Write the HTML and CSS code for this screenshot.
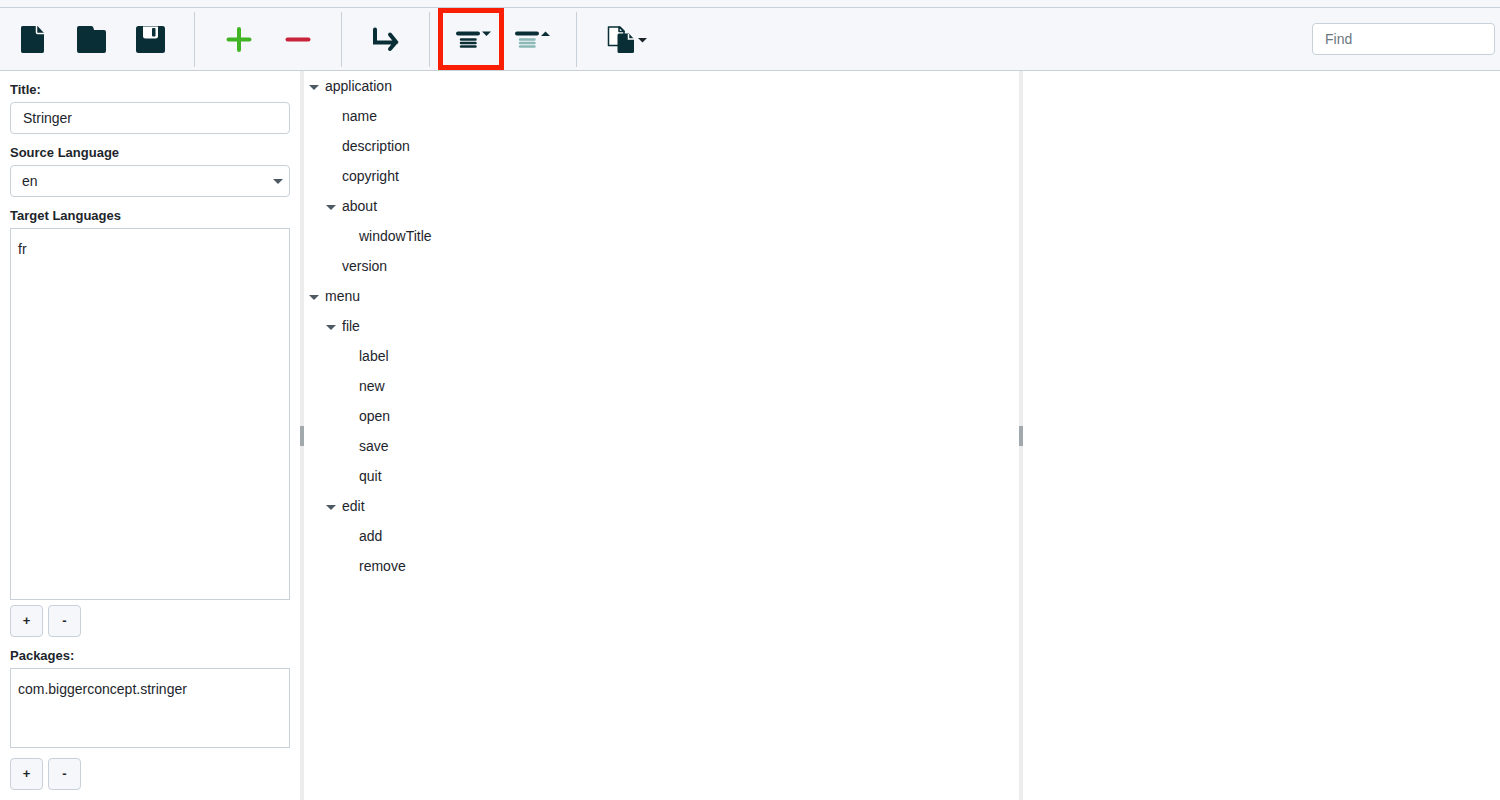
FILE: index.html
```html
<!DOCTYPE html>
<html lang="en">
<head>
<meta charset="utf-8">
<title>Stringer</title>
<link rel="stylesheet" href="styles.css">
</head>
<body>
<div class="app">
  <header class="toolbar">
    <div class="tools">
      <button class="tool" type="button" aria-label="New">
        <svg viewBox="3 8 59 62"><path class="ink" d="M22.500 26H37.500L44 33V51Q44 53 42.500 53H22.500Q21 53 21 51V27.500Q21 26 22.500 26Z"/><path d="M36.500 26V32.500Q36.500 33.500 37.500 33.500H44" fill="none" stroke="#fff" stroke-width="1.500"/></svg>
      </button>
      <button class="tool" type="button" aria-label="Open">
        <svg viewBox="62 8 59 62"><path class="ink" d="M79 26H91.500Q93 26 93.500 28L94 30H104Q106 30 106 32V51Q106 53 104 53H79Q77 53 77 51V28Q77 26 79 26Z"/></svg>
      </button>
      <button class="tool" type="button" aria-label="Save">
        <svg viewBox="121 8 59 62"><rect class="ink" x="136" y="26" width="29" height="27" rx="2.500"/><path d="M143 26.500H158V36Q158 38.500 155.500 38.500H145.500Q143 38.500 143 36Z" fill="#fff"/><rect class="ink" x="152" y="28" width="3.500" height="8.500" rx="1"/></svg>
      </button>
      <span class="separator"></span>
      <button class="tool" type="button" aria-label="Add">
        <svg viewBox="209 8 59 62"><path d="M228.500 39.500H249.500M239 29V50" stroke="#41b424" stroke-width="4" stroke-linecap="round"/></svg>
      </button>
      <button class="tool" type="button" aria-label="Remove">
        <svg viewBox="268 8 59 62"><path d="M287.500 39.500H308.500" stroke="#c9233a" stroke-width="4" stroke-linecap="round"/></svg>
      </button>
      <span class="separator"></span>
      <button class="tool" type="button" aria-label="Move">
        <svg viewBox="356 8 59 62"><path class="ink-line" d="M375 29.500V42.500H396M390 34.500L396 42L390 49" stroke-width="4"/></svg>
      </button>
      <span class="separator"></span>
      <button class="tool selected" type="button" aria-label="Expand all">
        <svg viewBox="444 8 59 62"><path class="ink-line" d="M458 33.500H478" stroke-width="4"/><path class="ink-line" d="M461 39.500H475.500M461 43H475.500M461 46.500H475.500" stroke-width="2.500"/><path class="ink" d="M482 31.500H491L486.500 36Z"/></svg>
      </button>
      <button class="tool" type="button" aria-label="Collapse all">
        <svg viewBox="503 8 59 62"><path class="ink-line" d="M517 33.500H537" stroke-width="4"/><path d="M520 39.500H534.500M520 43H534.500M520 46.500H534.500" stroke="#8bb9b7" stroke-width="2.500" stroke-linecap="round"/><path class="ink" d="M541 36H550L545.500 31.500Z"/></svg>
      </button>
      <span class="separator"></span>
      <button class="tool" type="button" aria-label="Copy">
        <svg viewBox="591 8 59 62"><path class="ink-edge" d="M608.500 27H620L624 31V45.500H608.500Z"/><path class="ink-edge" d="M619 27V31.500H624Z"/><path class="ink" d="M619 33.500H629L634 39V51.500Q634 53 632.500 53H619Q617.500 53 617.500 51.500V35Q617.500 33.500 619 33.500Z"/><path d="M628.500 34V39H634" fill="none" stroke="#fff" stroke-width="1.500"/><path d="M638 38H647L642.500 42.500Z" fill="#1d252c"/></svg>
      </button>
    </div>
    <input class="field find" type="search" placeholder="Find" aria-label="Find">
  </header>
  <main class="panes">
    <section class="sidebar">
      <label class="label" for="title">Title:</label>
      <input class="field" id="title" type="text" value="Stringer">
      <label class="label" for="source">Source Language</label>
      <div class="select-wrap">
        <select class="field" id="source"><option>en</option></select>
        <svg class="select-arrow" viewBox="0 0 10 5"><path d="M0 0H10L5 5Z" fill="#4d5963"/></svg>
      </div>
      <h2 class="label" id="targets">Target Languages</h2>
      <ul class="list grow" aria-labelledby="targets"><li>fr</li></ul>
      <div class="actions">
        <button class="btn" type="button">+</button>
        <button class="btn" type="button">-</button>
      </div>
      <h2 class="label" id="packages">Packages:</h2>
      <ul class="list packages" aria-labelledby="packages"><li>com.biggerconcept.stringer</li></ul>
      <div class="actions last">
        <button class="btn" type="button">+</button>
        <button class="btn" type="button">-</button>
      </div>
    </section>
    <div class="splitter"><span class="grip"></span></div>
    <section class="tree-pane">
      <ul class="tree">
        <li><span class="node open">application</span>
          <ul>
            <li><span class="node">name</span></li>
            <li><span class="node">description</span></li>
            <li><span class="node">copyright</span></li>
            <li><span class="node open">about</span>
              <ul><li><span class="node">windowTitle</span></li></ul>
            </li>
            <li><span class="node">version</span></li>
          </ul>
        </li>
        <li><span class="node open">menu</span>
          <ul>
            <li><span class="node open">file</span>
              <ul>
                <li><span class="node">label</span></li>
                <li><span class="node">new</span></li>
                <li><span class="node">open</span></li>
                <li><span class="node">save</span></li>
                <li><span class="node">quit</span></li>
              </ul>
            </li>
            <li><span class="node open">edit</span>
              <ul>
                <li><span class="node">add</span></li>
                <li><span class="node">remove</span></li>
              </ul>
            </li>
          </ul>
        </li>
      </ul>
    </section>
    <div class="splitter"><span class="grip"></span></div>
    <section class="detail-pane"></section>
  </main>
</div>
</body>
</html>
```
FILE: styles.css
```css
* { box-sizing: border-box; }
body {
  margin: 0;
  font: 14px/20px "Liberation Sans", Arial, sans-serif;
  color: #1d252c;
  background: #fff;
}
ul { list-style: none; margin: 0; padding: 0; }
button, input, select { font: inherit; color: inherit; }

.app {
  display: flex;
  flex-direction: column;
  height: 100vh;
  padding-top: 7px;
  background: #f5f7fb;
}
.toolbar {
  display: flex;
  align-items: center;
  justify-content: space-between;
  padding: 0 5px 0 3px;
  border: solid #c8d1d9;
  border-width: 1px 0;
}
.tools { display: flex; align-items: center; }
.tool {
  position: relative;
  width: 59px;
  height: 62px;
  padding: 0;
  border: 0;
  background: none;
}
.tool svg { display: block; width: 100%; height: 100%; }
.tool.selected::after {
  content: "";
  position: absolute;
  inset: 0 -1px 0 -6px;
  border: 5px solid #fa1e05;
}
.separator {
  width: 1px;
  height: 55px;
  margin: 0 14px;
  background: #c8d1d9;
}
.ink { fill: #092e35; }
.ink-line { fill: none; stroke: #092e35; stroke-linecap: round; }
.ink-edge { fill: #fff; stroke: #092e35; stroke-width: 1.5; stroke-linejoin: round; }

.field {
  width: 100%;
  height: 32px;
  padding: 0 12px;
  border: 1px solid #c8d1d9;
  border-radius: 4px;
  background: #fff;
  appearance: none;
}
.field::placeholder { color: #6b7780; opacity: 1; }
.find { width: 183px; }
select.field { padding: 0 11px; }
.select-wrap { position: relative; }
.select-arrow {
  position: absolute;
  right: 7px;
  top: 14px;
  width: 10px;
  height: 5px;
  pointer-events: none;
}

.panes { flex: 1; display: flex; min-height: 0; background: #fff; }
.sidebar {
  display: flex;
  flex-direction: column;
  flex: none;
  width: 300px;
  padding: 0 10px 10px;
}
.label {
  margin: 11px 0 4px;
  font-size: 13px;
  line-height: 16px;
  font-weight: bold;
}
.list { padding: 5px 7px; border: 1px solid #c8d1d9; }
.list li { line-height: 30px; }
.grow { flex: 1; }
.packages { height: 80px; }
.actions { display: flex; gap: 5px; margin-top: 5px; }
.actions.last { margin-top: 10px; }
.btn {
  width: 33px;
  height: 32px;
  padding: 0;
  border: 1px solid #c8d1d9;
  border-radius: 4px;
  background: #f5f7fb;
  font-size: 13px;
  font-weight: bold;
}
.splitter {
  display: flex;
  align-items: center;
  flex: none;
  width: 4px;
  background: #ececec;
}
.grip { width: 4px; height: 20px; background: #a2a9ad; }
.tree-pane { flex: 3; overflow: auto; }
.detail-pane { flex: 2; }
.tree { padding-left: 5px; }
.tree ul { padding-left: 17px; }
.node {
  display: flex;
  align-items: center;
  height: 30px;
}
.node::before { content: ""; width: 10px; margin-right: 6px; }
.node.open::before {
  height: 5px;
  margin-top: 3px;
  background: #4d5963;
  clip-path: polygon(0 0, 100% 0, 50% 100%);
}
```
